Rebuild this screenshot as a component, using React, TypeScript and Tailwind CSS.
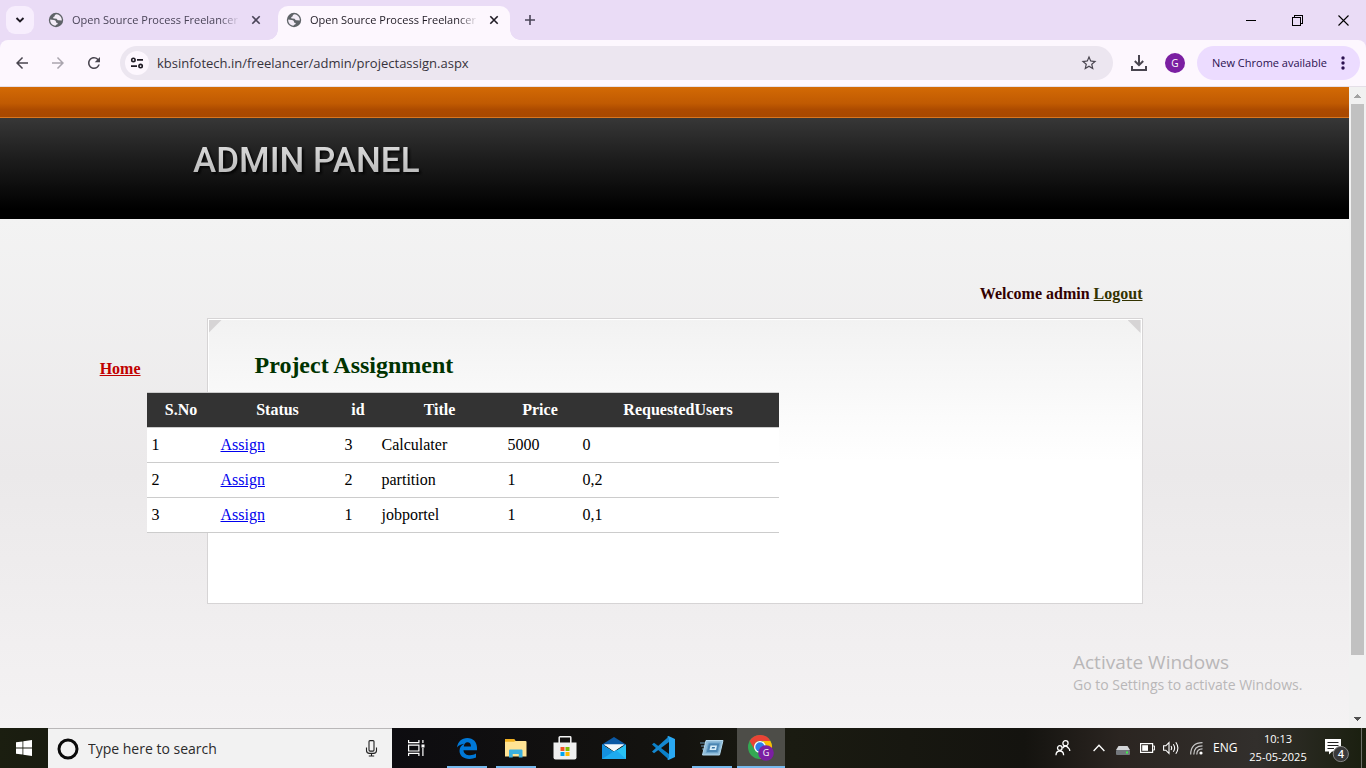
import React from "react";
import { MdArrowBack, MdArrowForward, MdRefresh, MdStarBorder } from "react-icons/md";

type Project = { sno: number; id: number; title: string; price: number; users: string };

const projects: Project[] = [
  { sno: 1, id: 3, title: "Calculater", price: 5000, users: "0" },
  { sno: 2, id: 2, title: "partition", price: 1, users: "0,2" },
  { sno: 3, id: 1, title: "jobportel", price: 1, users: "0,1" },
];

function CloseGlyph() {
  return (
    <svg width="16" height="16" viewBox="0 0 16 16" fill="none" stroke="currentColor" strokeWidth="1.6">
      <path d="M4.3 4.3 L11.7 11.7 M11.7 4.3 L4.3 11.7" />
    </svg>
  );
}

function GlobeIcon() {
  return (
    <svg width="16" height="16" viewBox="0 0 16 16" className="shrink-0">
      <circle cx="8" cy="8" r="7.2" fill="#5f6368" />
      <path
        d="M8.6 2.2 C7.2 2.6 6.6 3.2 6.7 4.2 L5.4 4.9 C4.9 5.5 5.3 6.4 6.2 6.5 L8.6 6.7 C9 7.6 9.6 8.2 10.6 8.2 L13.8 8.6 C14.1 5.6 12 2.6 8.6 2.2 Z"
        fill="#f3ecf7"
      />
      <path
        d="M2.2 7.6 L5.8 8 C7.4 8.3 8.2 9.2 8 10.4 L9.6 11 C9.9 12 9.2 12.6 8.2 12.8 L7.4 13.8 C4.2 13.6 1.9 10.8 2.2 7.6 Z"
        fill="#f3ecf7"
      />
    </svg>
  );
}

function Tab({ active }: { active?: boolean }) {
  return (
    <div
      role="tab"
      aria-selected={!!active}
      className={
        active
          ? "relative flex h-[34px] w-[232px] items-center self-end rounded-t-[10px] bg-[#fdf7fe] pb-[6px] pl-2 pr-2 text-[#1f1b24]"
          : "relative flex h-[34px] w-[238px] items-center self-end pb-[6px] pl-2 pr-[14px] text-[#4a4458]"
      }
    >
      {active && (
        <>
          <span className="absolute -left-[10px] bottom-0 h-[10px] w-[10px] bg-[radial-gradient(circle_at_0_0,#eadcf6_9.5px,#fdf7fe_10px)]" />
          <span className="absolute -right-[10px] bottom-0 h-[10px] w-[10px] bg-[radial-gradient(circle_at_100%_0,#eadcf6_9.5px,#fdf7fe_10px)]" />
        </>
      )}
      <GlobeIcon />
      <span className="ml-2 mr-2 min-w-0 flex-1 overflow-hidden whitespace-nowrap text-[11px] leading-4 [mask-image:linear-gradient(to_right,black_88%,transparent)]">
        Open Source Process Freelancer
      </span>
      <button aria-label="Close tab" className="shrink-0">
        <CloseGlyph />
      </button>
    </div>
  );
}

function TabStrip() {
  return (
    <div className="flex h-10 shrink-0 bg-[#eadcf6]">
      <button
        aria-label="Search tabs"
        className="ml-[6px] mt-[6px] flex h-7 w-7 shrink-0 items-center justify-center rounded-[9px] bg-[#f7eefd] text-[#1f1b24]"
      >
        <svg width="10" height="8" viewBox="0 0 10 8" fill="none" stroke="currentColor" strokeWidth="1.9">
          <path d="M1.5 2 L5 5.5 L8.5 2" />
        </svg>
      </button>
      <div role="tablist" className="ml-[6px] flex">
        <Tab />
        <Tab active />
      </div>
      <button aria-label="New tab" className="ml-3 mt-3 h-4 w-4 text-[#4a4458]">
        <svg width="16" height="16" viewBox="0 0 16 16" fill="none" stroke="currentColor" strokeWidth="1.6">
          <path d="M8 3 V13 M3 8 H13" />
        </svg>
      </button>
      <div className="ml-auto flex text-black">
        <button aria-label="Minimize" className="flex h-10 w-[46px] items-center justify-center">
          <svg width="10" height="10" stroke="currentColor" shapeRendering="crispEdges">
            <path d="M0 5.5 H10" />
          </svg>
        </button>
        <button aria-label="Restore" className="flex h-10 w-[46px] items-center justify-center">
          <svg width="11" height="11" stroke="currentColor" fill="none" shapeRendering="crispEdges">
            <path d="M0.5 2.5 H8.5 V10.5 H0.5 Z M2.5 2.5 V0.5 H10.5 V8.5 H8.5" />
          </svg>
        </button>
        <button aria-label="Close" className="flex h-10 w-[46px] items-center justify-center">
          <svg width="11" height="11" stroke="currentColor" strokeWidth="1.1">
            <path d="M0.5 0.5 L10.5 10.5 M10.5 0.5 L0.5 10.5" />
          </svg>
        </button>
      </div>
    </div>
  );
}

function Toolbar() {
  return (
    <div className="shrink-0 bg-[#eadcf6]">
      <div className="flex h-[47px] items-center rounded-t-[8px] border-b border-[#e5dfe8] bg-[#fdf7fe] pl-[13px] pr-[6px] text-[#49454f]">
        <button aria-label="Back" className="flex w-[18px] justify-center">
          <MdArrowBack className="h-[18px] w-[18px]" />
        </button>
        <button aria-label="Forward" className="ml-[18px] flex w-[18px] justify-center text-[#aaa5ae]">
          <MdArrowForward className="h-[18px] w-[18px]" />
        </button>
        <button aria-label="Reload" className="ml-[18px] flex w-[18px] justify-center">
          <MdRefresh className="h-[18px] w-[18px]" />
        </button>
        <div className="ml-[17px] flex h-[34px] min-w-0 flex-1 items-center rounded-full bg-[#ece6f0] pl-[5px] pr-[15px]">
          <button
            aria-label="Site information"
            className="flex h-6 w-6 shrink-0 items-center justify-center rounded-full bg-[#fdf7fe] text-[#1f1b24]"
          >
            <svg width="14" height="12" viewBox="0 0 14 12" fill="none" stroke="currentColor" strokeWidth="1.6">
              <circle cx="3.4" cy="2.9" r="1.7" />
              <path d="M7 2.9 H13 M1 9.1 H7" />
              <circle cx="10.6" cy="9.1" r="1.7" />
            </svg>
          </button>
          <input
            aria-label="Address"
            defaultValue="kbsinfotech.in/freelancer/admin/projectassign.aspx"
            className="ml-2 h-6 min-w-0 flex-1 bg-transparent text-[13px] text-[#37333c] outline-none"
          />
          <button aria-label="Bookmark this tab">
            <MdStarBorder className="h-[18px] w-[18px]" />
          </button>
        </div>
        <button aria-label="Downloads" className="ml-[17px]">
          <svg width="18" height="18" viewBox="0 0 18 18" fill="none" stroke="currentColor" strokeWidth="2">
            <path d="M9 1 V11 M4.8 7 L9 11.2 L13.2 7 M2 12 V16 H16 V12" />
          </svg>
        </button>
        <button
          aria-label="Profile"
          className="ml-[17px] flex h-5 w-5 items-center justify-center rounded-full bg-[#7b1fa2] text-[10px] text-white"
        >
          G
        </button>
        <button className="ml-3 flex h-[34px] w-[163px] shrink-0 items-center justify-between rounded-full bg-[#ecdcff] pl-[15px] pr-[15px] text-[#2b1150]">
          <span className="whitespace-nowrap text-[11px]">New Chrome available</span>
          <svg width="4" height="14" viewBox="0 0 4 14" fill="currentColor">
            <circle cx="2" cy="2" r="1.7" />
            <circle cx="2" cy="7" r="1.7" />
            <circle cx="2" cy="12" r="1.7" />
          </svg>
        </button>
      </div>
    </div>
  );
}

function Scrollbar() {
  return (
    <div aria-hidden="true" className="flex w-[17px] shrink-0 flex-col items-center bg-[#f1f1f1]">
      <svg width="17" height="17" shapeRendering="crispEdges">
        <path d="M5 11 L8.5 7 L12 11 Z" fill="#a3a3a3" />
      </svg>
      <div className="w-[13px] grow bg-[#c1c1c1]" />
      <div className="h-[56px]" />
      <svg width="17" height="17" shapeRendering="crispEdges">
        <path d="M5 6 L8.5 10 L12 6 Z" fill="#505050" />
      </svg>
    </div>
  );
}

function ProjectTable() {
  const columns = ["S.No", "Status", "id", "Title", "Price", "RequestedUsers"];
  return (
    <table className="relative -ml-[62px] w-[632px] table-fixed border-collapse bg-white text-black">
      <colgroup>
        <col className="w-[69px]" />
        <col className="w-[124px]" />
        <col className="w-[37px]" />
        <col className="w-[126px]" />
        <col className="w-[75px]" />
        <col className="w-[201px]" />
      </colgroup>
      <thead>
        <tr className="h-[35px] border-y border-[#cccccc] bg-[#333333] text-white">
          {columns.map((c) => (
            <th key={c} className="p-0 text-center font-bold">
              {c}
            </th>
          ))}
        </tr>
      </thead>
      <tbody>
        {projects.map((p) => (
          <tr key={p.sno} className="h-[35px] border-b border-[#cccccc]">
            <td className="px-[5px] py-0">{p.sno}</td>
            <td className="px-[5px] py-0">
              <a href="#assign" className="text-[#0000ee] underline">
                Assign
              </a>
            </td>
            <td className="px-[5px] py-0">{p.id}</td>
            <td className="px-[5px] py-0">{p.title}</td>
            <td className="px-[5px] py-0">{p.price}</td>
            <td className="px-[5px] py-0">{p.users}</td>
          </tr>
        ))}
      </tbody>
    </table>
  );
}

function Page() {
  return (
    <div className="flex min-w-0 flex-1 flex-col overflow-hidden font-['Liberation_Serif',serif] text-[16px] leading-[18px]">
      <div className="h-[31px] shrink-0 border-b border-[#d9761f] bg-[linear-gradient(#d36a05,#c05a02_55%,#ad4b00_75%,#a84800)]" />
      <header className="h-[101px] shrink-0 bg-[linear-gradient(#373737,#1d1d1d_40%,#000000_90%)] pl-[193px] pt-[20px]">
        <h1 className="w-fit bg-[linear-gradient(#e2e2e2,#b0b0b0)] bg-clip-text font-['Liberation_Sans_Narrow',Roboto,sans-serif] text-[35px] font-medium leading-[46px] text-transparent drop-shadow-[2px_2px_1px_rgba(0,0,0,0.8)]">
          ADMIN PANEL
        </h1>
      </header>
      <main className="grid flex-1 grid-cols-[1fr_minmax(0,936px)_1fr] content-start bg-[linear-gradient(#f3f3f3,#ebe9ea_50%,#f4f2f3)] pt-[66px]">
        <p className="col-start-2 mb-[15px] text-right font-bold text-[#330000]">
          Welcome admin{" "}
          <a href="#logout" className="text-[#333300] underline">
            Logout
          </a>
        </p>
        <nav className="col-start-1 row-start-2 pr-[66px] pt-[42px] text-right font-bold">
          <a href="#home" className="text-[#c00000] underline">
            Home
          </a>
        </nav>
        <section className="relative col-start-2 row-start-2 min-h-[286px] border border-[#d6d4d5] bg-[linear-gradient(#f2f2f2,#ffffff_50%)] p-px shadow-[inset_0_0_0_1px_#fff]">
          <span className="absolute left-px top-px h-[13px] w-[13px] bg-[#d6d4d5] [clip-path:polygon(0_0,100%_0,0_100%)]" />
          <span className="absolute right-px top-px h-[13px] w-[13px] bg-[#d6d4d5] [clip-path:polygon(0_0,100%_0,100%_100%)]" />
          <h2 className="mb-[13px] ml-[46px] mt-[31px] text-[24px] font-bold leading-[28px] text-[#003300]">
            Project Assignment
          </h2>
          <ProjectTable />
        </section>
      </main>
    </div>
  );
}

function Slot({ label, running, active, children }: { label: string; running?: boolean; active?: boolean; children: React.ReactNode }) {
  return (
    <button
      aria-label={label}
      className={
        active
          ? "relative flex h-10 w-12 items-center justify-center bg-[#4d4d48]"
          : "relative flex h-10 w-12 items-center justify-center"
      }
    >
      {children}
      {running && (
        <span
          className={
            active
              ? "absolute inset-x-0 bottom-0 h-[2px] bg-[#76b9ed]"
              : "absolute inset-x-1 bottom-0 h-[2px] bg-[#76b9ed]"
          }
        />
      )}
    </button>
  );
}

function Taskbar() {
  return (
    <footer className="flex h-10 shrink-0 items-center bg-[linear-gradient(to_right,#1b1e10,#0d0c10_28%,#14130f_50%,#1a1b11_58%,#14130f_75%,#2b2521_82%,#322f2c_92%,#1a1f0f)] text-white">
      <button aria-label="Start" className="flex h-10 w-12 shrink-0 items-center justify-center">
        <svg width="16" height="16" viewBox="0 0 16 16" fill="#fff">
          <path d="M0 2.3 L6.5 1.4 V7.6 H0 Z M7.3 1.3 L16 0 V7.6 H7.3 Z M0 8.4 H6.5 V14.6 L0 13.7 Z M7.3 8.4 H16 V16 L7.3 14.7 Z" />
        </svg>
      </button>
      <label className="flex h-10 w-[344px] shrink-0 items-center border-t border-[#b9b7b8] bg-[#f2f2f2] pl-[9px] pr-[14px] text-[#2b2b2b]">
        <svg width="22" height="22" viewBox="0 0 22 22" fill="none">
          <circle cx="11" cy="11" r="9" stroke="#0a0a0a" strokeWidth="3" />
        </svg>
        <input
          aria-label="Search Windows"
          placeholder="Type here to search"
          className="ml-[9px] h-8 min-w-0 flex-1 bg-transparent text-[14px] outline-none placeholder:text-[#2b2b2b]"
        />
        <svg width="13" height="17" viewBox="0 0 13 17" fill="none" stroke="#222" strokeWidth="1.1">
          <rect x="4" y="0.6" width="5" height="10.5" rx="1" />
          <path d="M1.5 7.5 V10.5 Q1.5 13.4 4.5 13.4 H8.5 Q11.5 13.4 11.5 10.5 V7.5 M6.5 13.4 V16 M3.8 16 H9.2" />
        </svg>
      </label>
      <Slot label="Task View">
        <svg width="17" height="16" viewBox="0 0 17 16" fill="none" stroke="#fff" strokeWidth="1.2">
          <path d="M0.6 0 V2.6 H10.9 V0 M0.6 5.2 H10.9 V11 H0.6 Z M0.6 16 V13.4 H10.9 V16 M14.9 0 V3 M14.9 8 V16" />
          <rect x="13.5" y="4.5" width="3" height="3" fill="#fff" stroke="none" />
        </svg>
      </Slot>
      <div className="ml-[3px] flex gap-px">
        <Slot label="Edge" running>
          <svg width="20" height="21" viewBox="0 0 20 21" fill="#0078d7">
            <path d="M0 9.5 C0.8 3.8 4.8 0 10.3 0 C16.4 0 20 4.4 20 9.7 V12.2 H6.5 C6.6 15.6 9.7 17.3 13 17.3 C15.3 17.3 17.3 16.6 19 15.6 V19.6 C17.2 20.5 14.9 21 12.4 21 C6.4 21 2.5 17.6 2.5 12.8 C2.5 9.7 4.4 7 7.3 5.8 C4.2 6 1.5 7.5 0 9.5 Z M6.8 8.5 H14 C14 5.8 12.7 4.3 10.4 4.3 C8.5 4.3 7 5.9 6.8 8.5 Z" fillRule="evenodd" />
          </svg>
        </Slot>
        <Slot label="File Explorer" running>
          <svg width="22" height="19" viewBox="0 0 22 19">
            <path d="M0 1 Q0 0 1 0 H9 L10.5 2 H20.5 Q21.5 2 21.5 3 V17.5 H0 Z" fill="#ffe394" />
            <path d="M0 2.8 H9 L10.5 2 L9 0 H1 Q0 0 0 1 Z" fill="#f2b01e" />
            <path d="M4 18.5 V11.5 Q4 10.5 5 10.5 H16.5 Q17.5 10.5 17.5 11.5 V18.5 H13.8 V15 H7.7 V18.5 Z" fill="#3bb0e0" />
          </svg>
          <span className="absolute bottom-0 right-1 h-[2px] w-2 bg-[#5687b0]" />
        </Slot>
        <Slot label="Store">
          <svg width="24" height="24" viewBox="0 0 24 24">
            <path d="M6.2 7 V1.5 Q6.2 0.8 7 0.8 H17 Q17.8 0.8 17.8 1.5 V7" fill="none" stroke="#f4f4f4" strokeWidth="1.5" />
            <path d="M0.5 6.5 H23.5 V21.5 Q23.5 23.5 21.5 23.5 H2.5 Q0.5 23.5 0.5 21.5 Z" fill="#efefef" />
            <path d="M7.5 11 H11.5 V15 H7.5 Z" fill="#f25022" />
            <path d="M12.5 11 H16.5 V15 H12.5 Z" fill="#7fba00" />
            <path d="M7.5 16 H11.5 V20 H7.5 Z" fill="#00a4ef" />
            <path d="M12.5 16 H16.5 V20 H12.5 Z" fill="#ffb900" />
          </svg>
        </Slot>
        <Slot label="Mail">
          <svg width="24" height="22" viewBox="0 0 24 22">
            <path d="M0 7.5 L12 0 L24 7.5 V9 H0 Z" fill="#0c59a4" />
            <path d="M0 7.5 L12 15 L24 7.5 V22 H0 Z" fill="#28c1f5" />
            <path d="M2 7.5 H22 L12 14.2 Z" fill="#f5f8fb" />
            <path d="M0 22 V7.5 L22 22 Z" fill="#1490df" />
            <path d="M0 22 L14 13 L24 22 Z" fill="#1eaaf0" />
            <path d="M2 7.5 H22 L12 14.2 Z" fill="#f5f8fb" />
          </svg>
        </Slot>
        <Slot label="Visual Studio Code">
          <svg width="24" height="24" viewBox="0 0 24 24">
            <path d="M1 8.5 L3 6.8 L18 18 V23.8 Z" fill="#0b80c8" />
            <path d="M1 15.5 L3 17.2 L18 6 V0.2 Z" fill="#1588d0" />
            <path d="M17.5 0 L24 3 V21 L17.5 24 L16 23 Q18 22.5 18 21 V3 Q18 1.5 16 1 Z" fill="#2aa8f2" />
          </svg>
        </Slot>
        <Slot label="Run" running>
          <svg width="24" height="16" viewBox="0 0 24 16">
            <path d="M0 3 H8 M1 6 H7 M2 9 H6" stroke="#6f9cba" strokeWidth="1" />
            <path d="M6 0.5 H23 L19.5 15 H2.5 Z" fill="#8fbcd9" stroke="#b5d9ee" />
            <path d="M8.5 3 H20 L17.7 12.5 H6.2 Z" fill="#4b86b3" stroke="#6fa5cb" />
            <path d="M10.5 5.5 H17 L16 10 H9.5 Z" fill="#d9effa" />
            <path d="M12 7 H15 L14.6 8.6 H11.6 Z" fill="#3875a6" />
          </svg>
        </Slot>
        <Slot label="Chrome" running active>
          <svg width="26" height="26" viewBox="0 0 26 26">
            <circle cx="12" cy="12" r="12" fill="#34a853" />
            <path d="M1.6 6 A12 12 0 0 1 22.4 6 H12 A6 6 0 0 0 6.8 9 L6.8 15 Z" fill="#ea4335" />
            <path d="M22.4 6 A12 12 0 0 1 12 24 L17.2 15 A6 6 0 0 0 12 6 Z" fill="#fbbc04" />
            <circle cx="12" cy="12" r="6" fill="#fff" />
            <circle cx="12" cy="12" r="4.7" fill="#2f7de9" />
            <circle cx="18" cy="18" r="7.8" fill="#7b1fa2" />
            <text x="18" y="21.2" textAnchor="middle" fontSize="9" fill="#fff">G</text>
          </svg>
        </Slot>
      </div>
      <div className="ml-auto flex h-10 items-center">
        <button aria-label="People">
          <svg width="16" height="16" viewBox="0 0 16 16" fill="none" stroke="#fff" strokeWidth="1.3">
            <circle cx="10.5" cy="3.3" r="2.6" />
            <path d="M7.6 8 Q10.5 4 13.4 8 Q14.8 9 14.8 11" />
            <circle cx="4.8" cy="8" r="2.3" />
            <path d="M1 15.2 Q1 11 4.8 11 Q8.6 11 8.6 15.2" />
          </svg>
        </button>
        <button aria-label="Show hidden icons" className="ml-[22px]">
          <svg width="12" height="8" viewBox="0 0 12 8" fill="none" stroke="#fff" strokeWidth="1.3">
            <path d="M0.6 7 L6 1.2 L11.4 7" />
          </svg>
        </button>
        <svg className="ml-[11px] mt-1" width="14" height="9" viewBox="0 0 14 9">
          <path d="M2.5 0 H11.5 L14 4 H0 Z" fill="#d3d5d8" />
          <rect y="4" width="14" height="5" rx="1" fill="#73777c" />
          <rect x="10" y="5.5" width="2" height="2" fill="#3df04b" />
        </svg>
        <svg className="ml-[10px]" width="15" height="10" viewBox="0 0 15 10">
          <rect x="0.6" y="0.6" width="12" height="8.8" fill="none" stroke="#fff" strokeWidth="1.2" />
          <rect x="2.2" y="2.2" width="5.8" height="5.6" fill="#fff" />
          <path d="M13.2 3 H14.6 V7 H13.2" fill="none" stroke="#fff" />
        </svg>
        <svg className="ml-2" width="17" height="14" viewBox="0 0 17 14" fill="none" stroke="#fff" strokeWidth="1.1">
          <path d="M0.6 4.8 H2.8 L6 1.6 V12.4 L2.8 9.2 H0.6 Z M8 5 Q9.4 7 8 9 M10.3 3.2 Q13 7 10.3 10.8 M12.8 1.2 Q17 7 12.8 12.8" />
        </svg>
        <svg className="ml-[10px]" width="13" height="13" viewBox="0 0 13 13" fill="none" stroke="#c9c9c9" strokeWidth="1.2">
          <path d="M0.7 12.5 Q0.7 0.7 12.5 0.7" />
          <path d="M3.8 12.5 Q3.8 3.8 12.5 3.8" />
          <path d="M6.8 12.5 Q6.8 6.8 12.5 6.8" />
          <circle cx="11" cy="11" r="1.6" fill="#fff" stroke="none" />
        </svg>
        <span className="ml-[10px] w-6 text-[12px] leading-4">ENG</span>
        <div className="ml-2 w-[66px] text-center text-[11px] leading-[18px]">
          <div>10:13</div>
          <div className="whitespace-nowrap">25-05-2025</div>
        </div>
        <button aria-label="Notifications" className="ml-[14px] mt-1">
          <svg width="25" height="26" viewBox="0 0 25 26">
            <path d="M0 2 H16 V14.5 H7 L4 17.5 V14.5 H0 Z" fill="#fff" />
            <path d="M2.5 5.5 H13.5 M2.5 8.5 H13.5 M2.5 11.5 H9" stroke="#222" strokeWidth="1.1" />
            <circle cx="15.8" cy="17" r="7.6" fill="#3a3a3a" stroke="#858585" />
            <text x="15.8" y="21" textAnchor="middle" fontSize="11" fontWeight="600" fill="#fff">4</text>
          </svg>
        </button>
        <div className="ml-[11px] mr-1 h-10 w-px bg-[#6d6f69]" />
      </div>
    </footer>
  );
}

export default function App() {
  return (
    <div className="flex h-screen flex-col overflow-hidden font-['Open_Sans','Noto_Sans',sans-serif]">
      <TabStrip />
      <Toolbar />
      <div className="relative flex min-h-0 flex-1">
        <Page />
        <Scrollbar />
        <div className="pointer-events-none absolute bottom-[33px] right-[57px] w-[236px] whitespace-nowrap text-[#b9b7b8]">
          <div className="text-[19px] leading-[26px]">Activate Windows</div>
          <div className="text-[14px] leading-5">Go to Settings to activate Windows.</div>
        </div>
      </div>
      <Taskbar />
    </div>
  );
}
